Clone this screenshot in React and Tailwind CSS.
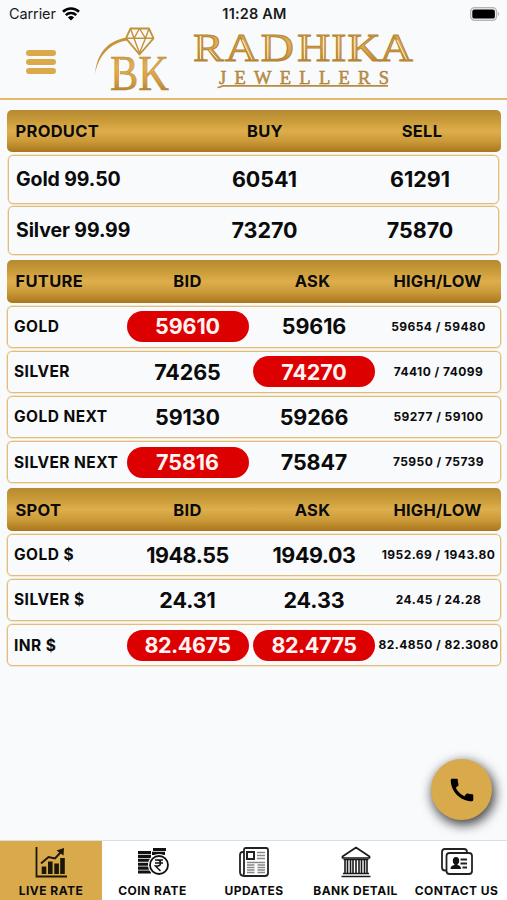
import { MdCall } from "react-icons/md";

const products = [
    { name: "Gold 99.50", buy: "60541", sell: "61291" },
    { name: "Silver 99.99", buy: "73270", sell: "75870" },
];

const futures = [
    { name: "GOLD", bid: "59610", ask: "59616", range: "59654 / 59480", bidDown: true },
    { name: "SILVER", bid: "74265", ask: "74270", range: "74410 / 74099", askDown: true },
    { name: "GOLD NEXT", bid: "59130", ask: "59266", range: "59277 / 59100" },
    { name: "SILVER NEXT", bid: "75816", ask: "75847", range: "75950 / 75739", bidDown: true },
];

const spots = [
    { name: "GOLD $", bid: "1948.55", ask: "1949.03", range: "1952.69 / 1943.80" },
    { name: "SILVER $", bid: "24.31", ask: "24.33", range: "24.45 / 24.28" },
    { name: "INR $", bid: "82.4675", ask: "82.4775", range: "82.4850 / 82.3080", bidDown: true, askDown: true },
];

const headClass =
    "h-[42.5px] shrink-0 rounded-[5px] bg-[linear-gradient(180deg,#b58a30_0%,#c99a38_25%,#deae4c_50%,#ca9938_75%,#aa751c_100%)] pt-px text-[16.5px] font-bold tracking-[0.3px]";

const rowClass =
    "grid items-center rounded-[5px] border border-[#e2bd7a] shadow-[0_0_0_0.5px_#ecd5a8]";

const StatusBar = () => (
    <div className="flex h-7 items-center justify-between pl-[9px] pr-[7px] text-[14.5px] text-[#1a1a1a]">
        <div className="flex w-40 items-center gap-[6px]">
            <span className="tracking-[-0.1px]">Carrier</span>
            <svg width="18" height="14" viewBox="0 0 18 14" fill="none" stroke="#000" strokeWidth="2.6">
                <path d="M1 4.8 A11.5 11.5 0 0 1 17 4.8" />
                <path d="M3.8 8.1 A7.6 7.6 0 0 1 14.2 8.1" />
                <path d="M9 13.6 L5.9 10.4 A4.5 4.5 0 0 1 12.1 10.4 Z" fill="#000" stroke="none" />
            </svg>
        </div>
        <span className="font-semibold tracking-[0.2px]">11:28 AM</span>
        <div className="flex w-40 justify-end">
            <svg width="30" height="14" viewBox="0 0 30 14">
                <rect x="0.6" y="0.6" width="26" height="12.8" rx="4" fill="#eee" stroke="#b5b5b7" strokeWidth="1.2" />
                <rect x="2.3" y="2.4" width="22.6" height="9.2" rx="2.2" fill="#000" />
                <path d="M28 4.6 Q30 7 28 9.4 Z" fill="#a9a9ab" />
            </svg>
        </div>
    </div>
);

const Logo = () => (
    <svg width="324" height="70" viewBox="92 26 324 70" className="overflow-visible">
        <defs>
            <linearGradient id="gold" x1="0" y1="0" x2="0" y2="1">
                <stop offset="0" stopColor="#b98a37" />
                <stop offset="0.4" stopColor="#e3b053" />
                <stop offset="0.65" stopColor="#d49e3f" />
                <stop offset="1" stopColor="#94692a" />
            </linearGradient>
        </defs>

        {/* Arc */}
        <path d="M95 74 C97 52 109 40 127 37.5 L127 40.5 C111 43 99 54 95 74 Z" fill="#c7943a" />

        {/* Diamond */}
        <g fill="none" stroke="#c4913a" strokeWidth="1.8" strokeLinejoin="round">
            <path d="M130.5 28.5 H149 L153.5 38.3 L139.5 54.5 L126 38.3 Z" />
            <path d="M126 38.3 H153.5 M130.5 28.5 L134 38.3 L139.5 28.5 L145.5 38.3 L149 28.5 M134 38.3 L139.5 53 L145.5 38.3" strokeWidth="1.4" />
        </g>

        <g fontFamily="'Liberation Serif', serif" fill="url(#gold)" stroke="#b58535" strokeWidth="0.5">
            <text x="110" y="89.5" fontSize="51" textLength="59" lengthAdjust="spacingAndGlyphs">BK</text>
            <text transform="scale(1.13 1)" x="170.8 199.1 230.5 262.8 292.9 307.3 335.8" y="61" fontSize="41" strokeWidth="1">RADHIKA</text>
            <text x="219" y="84" fontSize="18.5" textLength="170" fill="#c39446" stroke="#a67a34">JEWELLERS</text>
        </g>

        {/* Inline highlights on the letter stems */}
        <g fill="none" stroke="#fdf6e3" strokeWidth="0.9">
            <path d="M200.5 36 V59 M267.8 36 V59 M304.4 36 V59 M323.6 36 V59 M338.8 36 V59 M354.8 36 V59" />
            <path d="M209.5 50 L218 59.5 M242.5 40 L252 59.5 M397 40 L406.500 59.5" />
            <path d="M119.5 59 V87" />
        </g>
        <path d="M217.5 87.5 Q221 87.5 222.5 85.8 H388" fill="none" stroke="#b98a3e" strokeWidth="1.7" />
    </svg>
);

const Price = ({ value, down }) => (
    <div
        className={`flex h-[31px] w-[122px] items-center justify-center rounded-full text-[21.5px] font-bold ${value.length > 5 ? "tracking-[-0.45px]" : "tracking-[-0.1px]"} ${down ? "bg-[#dd0000] text-[#fff3f3]" : "text-[#0b0b0b]"}`}>
        {value}
    </div>
);

const RateTable = ({ title, rows }) => (
    <section className="flex flex-col gap-[3px]">
        <div className={`${headClass} grid grid-cols-[118px_126px_124px_126px] items-center`}>
            <span className="pl-[9px]">{title}</span>
            <span className="text-center">BID</span>
            <span className="text-center">ASK</span>
            <span className="text-center tracking-[0.2px]">HIGH/LOW</span>
        </div>
        {rows.map((row) => (
            <div key={row.name} className={`${rowClass} h-[42.2px] grid-cols-[117px_126px_127px_122px]`}>
                <span className="whitespace-nowrap pl-[6.5px] text-[15.5px] font-bold tracking-[0.45px]">{row.name}</span>
                <div className="flex justify-center"><Price value={row.bid} down={row.bidDown} /></div>
                <div className="flex justify-center"><Price value={row.ask} down={row.askDown} /></div>
                <span className="whitespace-nowrap text-center text-xs font-bold tracking-[0.45px]">{row.range}</span>
            </div>
        ))}
    </section>
);

const ChartIcon = () => (
    <svg width="32" height="32" viewBox="0 0 32 32" fill="none" stroke="#1b1608" strokeWidth="1.8">
        <path d="M1.5 1 V30.5 H32" />
        <path d="M9 28 V20.5 M15.3 28 V15.5 M21.6 28 V17.5 M27.5 28 V12" strokeWidth="4.6" />
        <path d="M6 17.5 L13.5 11 L20 12.5 L25.5 6.5" strokeWidth="1.9" />
        <path d="M21.5 4.5 L29 2 L28.5 9.5 Z" fill="#1b1608" stroke="none" />
    </svg>
);

const CoinIcon = () => (
    <svg width="32" height="30" viewBox="0 0 32 30" fill="none" stroke="#111">
        <path d="M1 5.5 H14 M1 9.4 H14 M1 13.3 H14 M1 17.2 H14 M1 21.1 H14 M1 25 H14 M16 2.5 H29 M15 6.4 H28" strokeWidth="3.1" />
        <circle cx="22" cy="18" r="11" fill="#fff" stroke="none" />
        <circle cx="22" cy="18" r="9" fill="#fff" strokeWidth="1.8" />
        <path d="M18 13 H26 M18 16 H26 M18 13 H20.5 C24.5 13 24.5 19 20.5 19 H18.5 L23.5 24" strokeWidth="1.5" />
    </svg>
);

const NewsIcon = () => (
    <svg width="30" height="30" viewBox="0 0 30 30" fill="none" stroke="#222" strokeWidth="1.8">
        <path d="M5 5 H3.5 Q1 5 1 8 V25 Q1 29 5 29 H26 Q29 29 29 26 V3 Q29 1 27 1 H7 Q5 1 5 3 V25 Q5 29 3 28.5" />
        <rect x="8" y="5" width="7" height="7" strokeWidth="2" />
        <path d="M18 5.5 H26 M18 8.5 H26 M18 11.5 H26 M8 15.5 H26 M8 18 H15.5 M18.5 18 H26 M8 20.5 H15.5 M18.5 20.5 H26 M8 23 H15.5 M18.5 23 H26 M8 25.5 H15.5 M18.5 25.5 H26" stroke="#888" strokeWidth="1.3" />
    </svg>
);

const BankIcon = () => (
    <svg width="30" height="32" viewBox="0 0 30 32" fill="none" stroke="#1a1a1a" strokeWidth="1.7">
        <path d="M1.5 10.5 L15 1.5 L28.5 10.5 V12 H1.5 Z" strokeLinejoin="round" />
        <path d="M4 13 V27 M6.5 13 V27 M9.5 13 V27 M12 13 V27 M15 13 V27 M18 13 V27 M20.5 13 V27 M23.5 13 V27 M26 13 V27" strokeWidth="1.6" />
        <path d="M2.5 13.5 H27.5 M2 27.5 H28 M0.5 30.5 H29.5" />
    </svg>
);

const ContactIcon = () => (
    <svg width="32" height="28" viewBox="0 0 32 28" fill="none" stroke="#222" strokeWidth="1.8">
        <path d="M5 22.5 H4 Q1 22.5 1 19.5 V4 Q1 1 4 1 H23 Q26 1 26 4 V5" />
        <rect x="5.5" y="5" width="25.5" height="21" rx="3" fill="#fff" />
        <ellipse cx="15" cy="12.8" rx="3.2" ry="3.8" fill="#111" stroke="none" />
        <path d="M9.5 21 Q9.5 17.5 13.5 17 V15 H16.5 V17 Q20 17.5 20 21 Z" fill="#111" stroke="none" />
        <path d="M19.5 11.5 H26 M19.5 15.5 H26 M21.5 19.5 H26" strokeWidth="2" />
    </svg>
);

const tabs = [
    { label: "LIVE RATE", icon: <ChartIcon />, active: true },
    { label: "COIN RATE", icon: <CoinIcon /> },
    { label: "UPDATES", icon: <NewsIcon /> },
    { label: "BANK DETAIL", icon: <BankIcon /> },
    { label: "CONTACT US", icon: <ContactIcon /> },
];

const App = () => {
    return (
        <div className="relative flex h-[900px] w-[507px] flex-col overflow-hidden bg-[#f9fafc] font-['Inter',sans-serif] text-[#0b0b0b]">
            <header className="h-[100px] shrink-0 border-b-2 border-[#e2b96d]">
                <StatusBar />
                <div className="flex h-[68px] items-start">
                    <button className="ml-[26px] mt-[22px] flex w-[30px] flex-col gap-[3px]">
                        <span className="h-[6px] rounded-full bg-[#dba949]" />
                        <span className="h-[6px] rounded-full bg-[#dba949]" />
                        <span className="h-[6px] rounded-full bg-[#dba949]" />
                    </button>
                    <div className="-mt-[2px] ml-9">
                        <Logo />
                    </div>
                </div>
            </header>

            <main className="flex grow flex-col gap-[5px] px-[6.5px] pt-[9.5px]">
                <section className="flex flex-col gap-[2.5px]">
                    <div className={`${headClass} grid grid-cols-[180px_157px_157px] items-center`}>
                        <span className="pl-[9px]">PRODUCT</span>
                        <span className="text-center">BUY</span>
                        <span className="text-center">SELL</span>
                    </div>
                    {products.map((item) => (
                        <div
                            key={item.name}
                            className={`${rowClass} mx-[1.5px] h-[49px] grid-cols-[177px_157px_154px] text-[21.5px] font-bold`}>
                            <span className="pl-[7px] pt-px text-[19.5px] tracking-[-0.1px]">{item.name}</span>
                            <span className="text-center">{item.buy}</span>
                            <span className="text-center">{item.sell}</span>
                        </div>
                    ))}
                </section>
                <RateTable title="FUTURE" rows={futures} />
                <RateTable title="SPOT" rows={spots} />
            </main>

            {/* Floating call button */}
            <button className="absolute left-[431px] top-[759px] flex h-[61px] w-[61px] items-center justify-center rounded-full bg-[#d9aa4b] shadow-[2px_4px_12px_1px_rgba(0,0,0,0.75)]">
                <MdCall className="h-[30px] w-[30px] text-black" />
            </button>

            <nav className="grid h-[60px] shrink-0 grid-cols-[102px_101px_102px_101px_101px] border-t border-[#dcdde0] bg-white">
                {tabs.map((tab) => (
                    <div key={tab.label} className={`flex flex-col items-center ${tab.active ? "bg-[#d9aa4b]" : ""}`}>
                        <div className="mt-[5px] flex h-8 items-center justify-center">{tab.icon}</div>
                        <span className="mt-[5px] whitespace-nowrap text-[12px] font-bold leading-4 tracking-[0.45px]">{tab.label}</span>
                    </div>
                ))}
            </nav>
        </div>
    );
};

export default App;
